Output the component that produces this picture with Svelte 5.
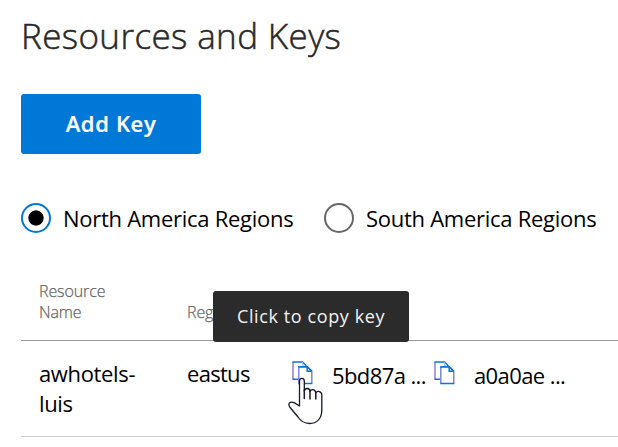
<script>
  let selected = $state('north');
  const regions = [
    { id: 'north', label: 'North America Regions' },
    { id: 'south', label: 'South America Regions' }
  ];
  const keys = ['5bd87a ...', 'a0a0ae ...'];
</script>

{#snippet copyIcon()}
  <svg class="copy" width="21" height="24" viewBox="0 0 21 24" fill="none" stroke-width="1.5">
    <path d="M1 18.2V1" stroke="#9a78dc" />
    <path d="M.4 1H10.5L14.5 5M.4 18.2H6" stroke="#0875d5" />
    <path d="M10.5 1L11 5" stroke="#8fb7ee" stroke-width="1" />
    <path d="M6.8 22.3V6H15.3L19.8 10.5V22.3" fill="#fff" stroke="#7a87df" />
    <path d="M6.2 5.8H15.4L20 10.4M6.2 22.4H20.4M15.2 6V10.3H19.8" stroke="#0875d5" />
  </svg>
{/snippet}

<main>
  <h1>Resources and Keys</h1>
  <button class="add">Add Key</button>

  <div class="regions">
    {#each regions as r}
      <button class="option" onclick={() => (selected = r.id)}>
        <span class="radio" class:on={selected === r.id}></span>
        <span class="label">{r.label}</span>
      </button>
    {/each}
  </div>

  <section class="table">
    <div class="row head">
      <div class="name">Resource<br />Name</div>
      <div class="region">Region</div>
    </div>
    <div class="row body">
      <div class="name">awhotels-<br />luis</div>
      <div class="region">eastus</div>
      {#each keys as key}
        <div class="key">{@render copyIcon()}<span>{key}</span></div>
      {/each}
    </div>
    <div class="tooltip">Click to copy key</div>
    <svg class="cursor" width="36" height="48" viewBox="0 0 36 48">
      <path d="M11.5 25V4C11.5 .4 16.3 .4 16.3 4V14C17.2 10.4 21.9 10.8 22 14.5C23 11.5 27.5 12 27.8 16C29.2 13.4 33.8 14 33.8 18V33C33.8 42 28.5 46.5 21.5 46.5C16 46.5 13 44.5 10 40L1.7 30C-.5 26.2 2.5 24.1 6.1 25.6L11.5 29Z" fill="#fff" stroke="#16182b" stroke-width="1.3" stroke-linejoin="round" />
      <path d="M16.3 13V21.5M22 14V22M27.8 16V22" fill="none" stroke="#16182b" stroke-width="1.5" stroke-linecap="round" />
    </svg>
  </section>
</main>

<style>
  :global(body) { background: #fff; overflow: hidden; }
  main {
    box-sizing: border-box;
    width: 618px;
    height: 447px;
    padding: 11px 0 0 21px;
    overflow: hidden;
    color: #000;
    font-family: "Open Sans", "Noto Sans", sans-serif;
    white-space: nowrap;
  }
  button { font: inherit; color: inherit; border: 0; padding: 0; background: none; }
  h1 {
    margin: 0 0 33px;
    font-size: 35px;
    line-height: 50px;
    font-weight: 300;
    letter-spacing: .38px;
    -webkit-text-stroke: .5px #292929;
    color: #292929;
  }
  .add {
    display: block;
    width: 180px;
    height: 60px;
    padding-bottom: 2px;
    border-radius: 3px;
    background: #0078d7;
    color: #fff;
    font-size: 22px;
    font-weight: 600;
    letter-spacing: .65px;
    -webkit-text-stroke: .2px #fff;
  }
  .regions { display: flex; gap: 30px; margin-top: 48px; height: 34px; }
  .option { display: flex; align-items: center; height: 32px; gap: 12px; }
  .option:first-child { width: 273px; }
  .radio {
    box-sizing: border-box;
    width: 30px;
    height: 30px;
    border: 2px solid #666;
    border-radius: 50%;
    flex: none;
  }
  .radio.on {
    border-color: #0078d7;
    background: radial-gradient(circle, #000 7.2px, transparent 8px);
  }
  .label { font-size: 22px; line-height: 30px; letter-spacing: -.27px; }
  .table { position: relative; }
  .row { display: flex; box-sizing: border-box; padding-left: 18px; }
  .name { width: 148px; flex: none; }
  .head {
    height: 105px;
    align-items: flex-end;
    padding-bottom: 17px;
    font-size: 16px;
    line-height: 21px;
    letter-spacing: -.1px;
    color: #666;
    border-bottom: 1px solid #999;
    font-weight: 300;
    -webkit-text-stroke: .25px #666;
  }
  .body {
    height: 96px;
    padding-top: 17px;
    font-size: 22px;
    line-height: 30px;
    letter-spacing: -.35px;
    border-bottom: 1px solid #ccc;
  }
  .body .region { width: 105px; flex: none; letter-spacing: -.7px; }
  .key { display: flex; width: 142px; }
  .key span { padding: 2px 0 0 19px; letter-spacing: -.6px; }
  .copy { flex: none; margin-top: 3px; }
  .tooltip {
    position: absolute;
    left: 192px;
    top: 55px;
    width: 196px;
    height: 51px;
    box-sizing: border-box;
    padding-left: 24px;
    line-height: 51px;
    background: #2b2b2b;
    border-radius: 3px;
    color: #f2f2f2;
    font-size: 18px;
    letter-spacing: .6px;
  }
  .cursor { position: absolute; left: 267px; top: 141px; }
</style>
